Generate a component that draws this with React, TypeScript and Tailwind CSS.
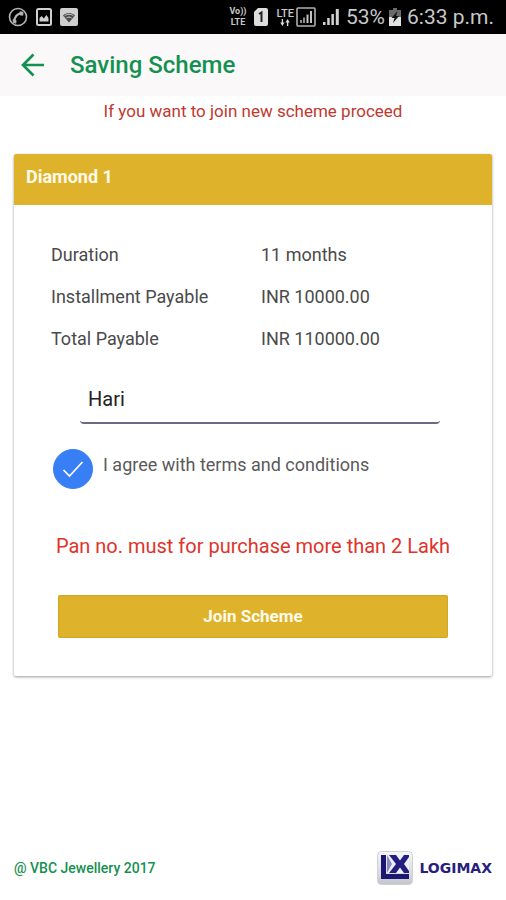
import React, { useState } from 'react';

const details = [
  { label: 'Duration', value: '11 months' },
  { label: 'Installment Payable', value: 'INR 10000.00' },
  { label: 'Total Payable', value: 'INR 110000.00' },
];

const CallIcon = () => (
  <svg className="h-5 w-5" viewBox="0 0 20 20" fill="none" stroke="#b4b4b4">
    <circle cx="10" cy="10" r="8.5" strokeWidth="1.6" />
    <path d="M6.6 14.5C6 10 10 6 14 6.4" strokeWidth="2.2" />
    <path d="M5 12.6l3 .6-.2 3-2.4-.8zM12 4.8l3 .4-.2 3-2.8-.4z" fill="#b4b4b4" />
  </svg>
);

const PictureIcon = () => (
  <svg className="h-[18px] w-4" viewBox="0 0 16 18">
    <rect x="1" y="1" width="14" height="16" rx="1.5" fill="none" stroke="#d0d0d0" strokeWidth="2" />
    <path d="M3.5 13.5V10l2.2-2 2.1 2.4L10.4 7l2.1 3v3.5z" fill="#d0d0d0" />
  </svg>
);

const WifiIcon = () => (
  <svg className="h-[18px] w-[18px]" viewBox="0 0 18 18">
    <rect width="18" height="18" rx="2" fill="#cfcfcf" />
    <path d="M3 7.5C5.5 4 12.5 4 15 7.5L9 14.5z" fill="#4a4a4a" />
    <path d="M4.6 7.8c2.6-2 6.2-2 8.8 0M6.4 10c1.6-1.2 3.6-1.2 5.2 0" fill="none" stroke="#cfcfcf" />
  </svg>
);

const SimIcon = () => (
  <svg className="h-[18px] w-3.5" viewBox="0 0 14 18">
    <path d="M4 0h8a2 2 0 012 2v14a2 2 0 01-2 2H2a2 2 0 01-2-2V4z" fill="#dedede" />
    <path d="M5 6l2.5-1.5V14" fill="none" stroke="#222" strokeWidth="2" />
  </svg>
);

const DataArrows = () => (
  <svg className="h-2 w-2.5" viewBox="0 0 10 8" fill="#d8d8d8">
    <path d="M1.7 0h1.4v3.5h1.5L2.4 7 .2 3.5h1.5zM6.9 7h1.4V3.500h1.5L7.600 0 5.400 3.500h1.500z" />
  </svg>
);

const BoxedSignal = () => (
  <svg className="h-5 w-5" viewBox="0 0 20 20">
    <rect x="1" y="1" width="18" height="18" rx="1" fill="none" stroke="#b0b0b0" strokeWidth="1.6" />
    <path d="M4 13h2v3H4zM7 10.5h2V16H7z" fill="#8a8a8a" />
    <path d="M10.5 7.5h2V16h-2zM14 4h2v12h-2z" fill="#c4c4c4" />
  </svg>
);

const Signal = () => (
  <svg className="h-[18px] w-[18px]" viewBox="0 0 18 18" fill="#d2d2d2">
    <path d="M1 14h2.5v3H1zM5.2 10h2.5v7H5.2zM9.4 6h2.5v11H9.4zM13.8 1h3v16h-3z" />
  </svg>
);

const BatteryIcon = () => (
  <svg className="h-[18px] w-3" viewBox="0 0 12 18">
    <path d="M4 0h4v2h4v7H0V2h4z" fill="#6a6a6a" />
    <path d="M0 9h12v9H0z" fill="#e2e2e2" />
    <path d="M8.5 3L2.5 10h3L4 15l6-7H7z" fill="#111" />
  </svg>
);

const StatusBar: React.FC = () => (
  <div className="flex h-[34px] items-center justify-between bg-black pr-3 pl-2 text-[#c8c8c8]">
    <div className="flex items-center gap-2">
      <CallIcon />
      <PictureIcon />
      <WifiIcon />
    </div>
    <div className="flex items-center">
      <div className="mr-2 text-center text-[9px] leading-[11px] font-bold">
        <div>Vo))</div>
        <div>LTE</div>
      </div>
      <SimIcon />
      <div className="mr-0.5 ml-2 flex flex-col items-center text-[11px] leading-[11px] font-medium">
        <span>LTE</span>
        <DataArrows />
      </div>
      <BoxedSignal />
      <div className="mx-1.5">
        <Signal />
      </div>
      <span className="text-[21px] leading-6">53%</span>
      <div className="mr-1.5 ml-1">
        <BatteryIcon />
      </div>
      <span className="text-[21px] leading-6">6:33 p.m.</span>
    </div>
  </div>
);

const Header: React.FC = () => (
  <header className="flex h-[62px] items-center gap-6 bg-[#faf8f9] px-5 text-[#149150]">
    <button type="button" aria-label="Back">
      <svg className="h-6 w-[26px]" viewBox="0 0 26 24" fill="none" stroke="currentColor" strokeWidth="2.7">
        <path d="M24 12H3M13.5 1.5L3 12l10.5 10.5" />
      </svg>
    </button>
    <h1 className="text-2xl leading-8 font-medium">Saving Scheme</h1>
  </header>
);

const Logo: React.FC = () => (
  <div className="flex items-center gap-1.5">
    <svg className="h-9 w-9" viewBox="0 0 36 36">
      <defs>
        <linearGradient id="badge" x1="0" y1="0" x2="0" y2="1">
          <stop offset="0" stopColor="#f6f6fa" />
          <stop offset="0.7" stopColor="#d8d8de" />
          <stop offset="1" stopColor="#c4c4cc" />
        </linearGradient>
      </defs>
      <rect x="0.5" y="1.5" width="35" height="33" rx="4" fill="url(#badge)" stroke="#cfcfd6" />
      <path d="M4 5h5v19h23v5H4z" fill="#1c1872" />
      <path d="M10 5h22v18H10z" fill="#f1f0fa" />
      <path d="M10 5v18l5-9z" fill="#8d8ac6" />
      <path d="M12 5h7l4 5.5L27 5h5v2l-5 7 5 7v2h-5l-4-5.5-4 5.5h-7l7-9z" fill="#231e80" />
    </svg>
    <span className="font-['DejaVu_Sans',sans-serif] text-sm font-bold text-[#27217d]">LOGIMAX</span>
  </div>
);

export default function App() {
  const [name, setName] = useState('Hari');
  const [agreed, setAgreed] = useState(true);

  return (
    <div className="flex min-h-screen flex-col bg-white font-[Roboto,sans-serif]">
      <StatusBar />
      <Header />

      <main className="px-3.5">
        <p className="pt-[3px] text-center text-[17px] leading-6 text-[#c0392f]">
          If you want to join new scheme proceed
        </p>

        <section className="mt-[31px] rounded-xs pb-[38px] shadow-[0_1px_3px_rgba(0,0,0,0.4)]">
          <h2 className="h-[51px] rounded-t-xs bg-[#dfb22b] px-3 pt-[11px] text-lg leading-6 font-bold text-[#fffbea]">
            Diamond 1
          </h2>

          <form className="px-11" onSubmit={(e) => e.preventDefault()}>
            <table className="-mx-[7px] mt-[29px] w-full table-fixed text-left text-lg text-[#4a4a4a]">
              <tbody>
                {details.map((row) => (
                  <tr key={row.label} className="h-[42px]">
                    <th scope="row" className="w-[210px] font-normal">{row.label}</th>
                    <td>{row.value}</td>
                  </tr>
                ))}
              </tbody>
            </table>

            <div className="mr-2 ml-[22px]">
              <input
                type="text"
                aria-label="Name"
                value={name}
                onChange={(e) => setName(e.target.value)}
                className="mt-4 h-12 w-full rounded-sm border-b-2 border-[#6d6886] px-2 text-xl text-[#222] outline-none"
              />
            </div>

            <div className="-ml-[5px] mt-[25px] flex">
              <div className="relative h-10 w-10">
                <input
                  id="agree"
                  type="checkbox"
                  checked={agreed}
                  onChange={(e) => setAgreed(e.target.checked)}
                  className="peer block h-10 w-10 appearance-none rounded-full border border-[#387ef5] checked:bg-[#387ef5]"
                />
                <svg
                  className="pointer-events-none absolute inset-0 hidden h-10 w-10 peer-checked:block"
                  viewBox="0 0 40 40"
                  fill="none"
                  stroke="#fff"
                  strokeWidth="1.7"
                >
                  <path d="M10.5 21l6 6L29.5 13" />
                </svg>
              </div>
              <label htmlFor="agree" className="ml-2.5 pt-1 text-lg leading-6 text-[#5a5a5a]">
                I agree with terms and conditions
              </label>
            </div>

            <p className="-mx-4 mt-[43px] text-center text-xl leading-7 text-[#e0332b]">
              Pan no. must for purchase more than 2 Lakh
            </p>

            <button
              type="submit"
              className="mt-[35px] block h-[43px] w-full rounded-xs bg-[#dfb22b] text-[17px] font-bold text-[#fffbea] shadow-[inset_0_0_1px_1px_rgba(160,120,10,0.2)]"
            >
              Join Scheme
            </button>
          </form>
        </section>
      </main>

      <footer className="mt-auto flex items-center justify-between px-3.5 pb-3.5">
        <span className="text-sm font-medium text-[#149150]">@ VBC Jewellery 2017</span>
        <Logo />
      </footer>
    </div>
  );
}
